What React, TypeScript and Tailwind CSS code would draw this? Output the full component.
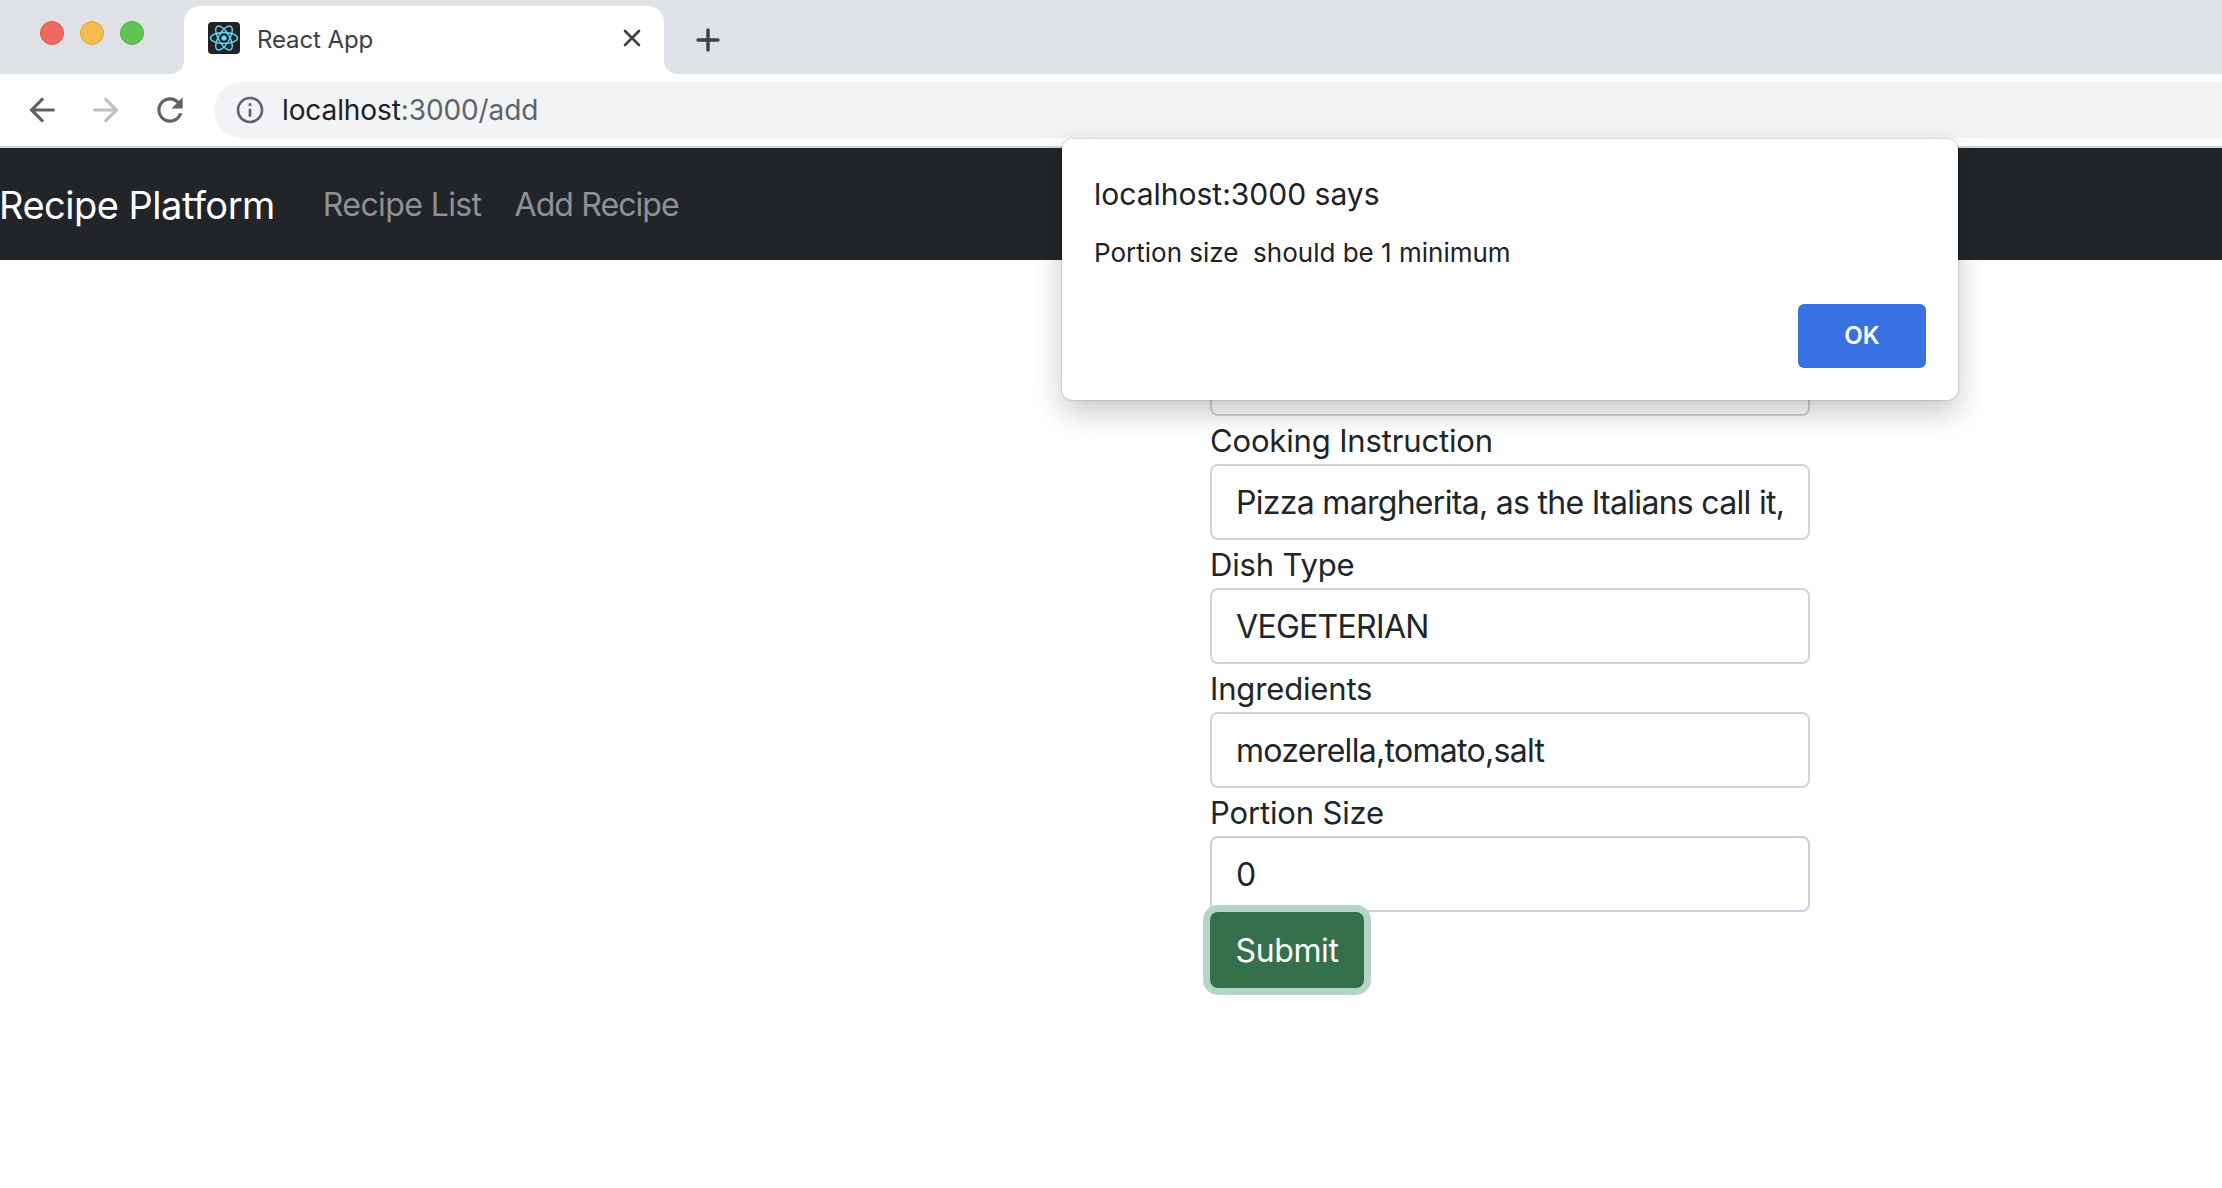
const font = { fontFamily: "Inter, 'Liberation Sans', sans-serif" };

const fields = [
  { label: "Recipe Name", value: "" },
  { label: "Cooking Instruction", value: "Pizza margherita, as the Italians call it, is a simple pizza hailing from Naples" },
  { label: "Dish Type", value: "VEGETERIAN" },
  { label: "Ingredients", value: "mozerella,tomato,salt" },
  { label: "Portion Size", value: "0", focused: true },
];

const ReactIcon = () => (
  <svg viewBox="0 0 32 32" className="h-8 w-8 shrink-0">
    <rect width="32" height="32" rx="4" fill="#222222" />
    <g fill="none" stroke="#61dafb" strokeWidth="1.4">
      <ellipse cx="16" cy="16" rx="13.5" ry="5.5" />
      <ellipse cx="16" cy="16" rx="13.5" ry="5.5" transform="rotate(60 16 16)" />
      <ellipse cx="16" cy="16" rx="13.5" ry="5.5" transform="rotate(120 16 16)" />
    </g>
    <circle cx="16" cy="16" r="2.6" fill="#61dafb" />
  </svg>
);

const BackArrow = ({ color, flip }: { color: string; flip?: boolean }) => (
  <svg viewBox="0 0 24 24" className={flip ? "h-[38px] w-[38px] rotate-180" : "h-[38px] w-[38px]"} fill={color}>
    <path d="M20 11H7.83l5.59-5.59L12 4l-8 8 8 8 1.41-1.41L7.83 13H20v-2z" />
  </svg>
);

const TabFlare = ({ right }: { right?: boolean }) => (
  <svg viewBox="0 0 14 14" className={right ? "h-[14px] w-[14px] shrink-0 self-end -scale-x-100" : "h-[14px] w-[14px] shrink-0 self-end"}>
    <path d="M14 0v14H0c8 0 14-6 14-14z" fill="#ffffff" />
  </svg>
);

export default function App() {
  return (
    <div className="relative h-[1188px] w-[2222px] overflow-hidden bg-white" style={font}>
      {/* Tab strip */}
      <div className="flex h-[74px] bg-[#dee1e6]">
        <div className="flex w-[170px] gap-[16px] pl-[40px] pt-[21px]">
          <span className="h-6 w-6 rounded-full border border-[#d9564c] bg-[#ee6a5f]" />
          <span className="h-6 w-6 rounded-full border border-[#dea43c] bg-[#f5bd4f]" />
          <span className="h-6 w-6 rounded-full border border-[#52ad46] bg-[#61c554]" />
        </div>
        <TabFlare />
        <div className="mt-[6px] flex h-[68px] w-[480px] items-center rounded-t-[16px] bg-white pb-[4px] pl-[24px] pr-[23px]">
          <ReactIcon />
          <span className="ml-[17px] flex-1 pt-[3px] text-[24px] tracking-[-0.1px] text-[#3c4043]">React App</span>
          <svg viewBox="0 0 18 18" className="h-[18px] w-[18px]" stroke="#3c4043" strokeWidth="2.6" strokeLinecap="round">
            <path d="M2 2l14 14M16 2L2 16" />
          </svg>
        </div>
        <TabFlare right />
        <svg viewBox="0 0 24 24" className="ml-[18px] mt-[28px] h-6 w-6" stroke="#3c4043" strokeWidth="3.4" strokeLinecap="round">
          <path d="M12 2v20M2 12h20" />
        </svg>
      </div>

      {/* Toolbar */}
      <div className="flex h-[74px] items-start border-b-2 border-[#d6d8db] bg-white pl-[23px] pt-[8px]">
        <div className="flex h-14 items-center gap-[26px]">
          <BackArrow color="#5f6368" />
          <BackArrow color="#bdc1c6" flip />
          <svg viewBox="0 0 24 24" className="h-[38px] w-[38px]" fill="#5f6368">
            <path d="M17.65 6.35C16.2 4.9 14.21 4 12 4c-4.42 0-7.99 3.58-7.99 8s3.57 8 7.99 8c3.73 0 6.84-2.55 7.73-6h-2.08c-.82 2.33-3.04 4-5.65 4-3.31 0-6-2.69-6-6s2.69-6 6-6c1.66 0 3.14.69 4.22 1.78L13 11h7V4l-2.35 2.35z" />
          </svg>
        </div>
        <div className="ml-[25px] flex h-14 flex-1 items-center rounded-l-full bg-[#f1f3f4] pl-[20px]">
          <svg viewBox="0 0 24 24" className="h-8 w-8" fill="#5f6368">
            <path d="M11 7h2v2h-2zm0 4h2v6h-2zm1-9C6.48 2 2 6.48 2 12s4.48 10 10 10 10-4.48 10-10S17.52 2 12 2zm0 18c-4.41 0-8-3.59-8-8s3.59-8 8-8 8 3.59 8 8-3.59 8-8 8z" />
          </svg>
          <span className="ml-[16px] text-[28px] tracking-[-0.1px] text-[#5f6368]">
            <span className="text-[#202124]">localhost</span>:3000/add
          </span>
        </div>
      </div>

      {/* Navbar */}
      <nav className="flex h-[112px] items-center bg-[#212529] pt-[2px]">
        <span className="-ml-[1px] text-[38px] tracking-[-0.5px] text-white">Recipe Platform</span>
        <span className="ml-[48px] text-[32px] tracking-[-0.6px] text-[#8f9193]">Recipe List</span>
        <span className="ml-[33px] text-[32px] tracking-[-0.9px] text-[#8f9193]">Add Recipe</span>
      </nav>

      {/* Form */}
      <form className="ml-[1210px] w-[600px] pt-[32px]">
        {fields.map((f) => (
          <div key={f.label}>
            <label className="block h-[48px] text-[31px] leading-[50px] tracking-[-0.15px] text-[#212529]">{f.label}</label>
            <input
              readOnly
              value={f.value}
              className={
                f.focused
                  ? "block h-[76px] w-full rounded-[8px] border-2 border-[#c3d0e2] bg-white px-[24px] text-[32px] tracking-[-0.7px] text-[#212529] outline-none"
                  : "block h-[76px] w-full rounded-[8px] border-2 border-[#ced4da] bg-white px-[24px] text-[32px] tracking-[-0.7px] text-[#212529] outline-none"
              }
            />
          </div>
        ))}
        <button
          type="button"
          className="block h-[76px] w-[154px] rounded-[8px] bg-[#34704c] pt-[2px] text-[32px] tracking-[-0.4px] text-white shadow-[0_0_0_7px_#b7d5c5]"
        >
          Submit
        </button>
      </form>

      {/* Alert */}
      <div className="absolute left-[1062px] top-[139px] h-[261px] w-[896px] rounded-[10px] bg-white px-[32px] pt-[37px] shadow-[0_0_2px_rgba(0,0,0,0.35),0_12px_30px_rgba(0,0,0,0.22)]">
        <div className="text-[30px] leading-[36px] text-[#202124]">localhost:3000 says</div>
        <div className="mt-[25px] whitespace-pre text-[26px] leading-[32px] text-[#202124]">Portion size  should be 1 minimum</div>
        <div className="mt-[35px] flex justify-end">
          <button type="button" className="h-16 w-32 rounded-[6px] bg-[#3871e0] text-[24px] font-semibold text-white">
            OK
          </button>
        </div>
      </div>
    </div>
  );
}
